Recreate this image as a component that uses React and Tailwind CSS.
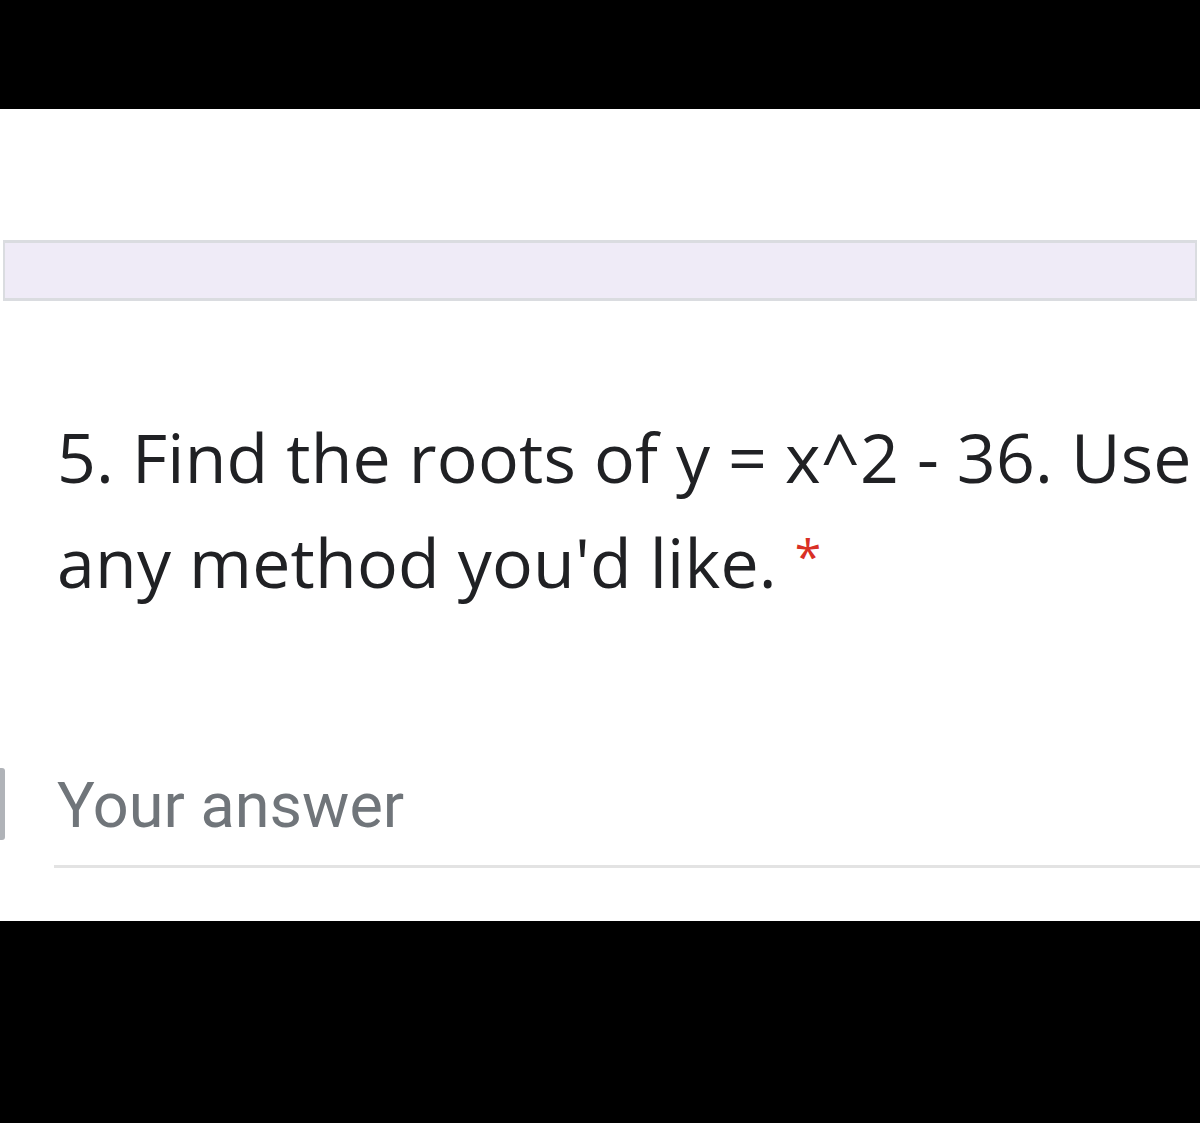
export default function App() {
  return (
    <div className="w-[1200px] h-[1123px] bg-white flex flex-col overflow-hidden">
      <div className="h-[109px] bg-black shrink-0" />
      <div className="h-[131px] shrink-0" />
      <div className="h-[61px] ml-[3px] mr-[3px] bg-[#efebf7] border-y-[3px] border-l-[2px] border-r-[2px] border-[#dadce0] shrink-0" />
      <div className="h-[103px] shrink-0" />
      <div className="h-[210px] shrink-0 pl-[57px] text-[#202124] text-[68px] leading-[105px] tracking-[0.2px] whitespace-nowrap" style={{ fontFamily: '"Open Sans", sans-serif' }}>
        <div>5. Find the roots of y = x^2 - 36. Use</div>
        <div>
          any method you'd like. <span className="text-[#d93025] text-[48px] align-top relative top-[-6px]">*</span>
        </div>
      </div>
      <div className="relative h-[307px] shrink-0 flex flex-col">
        <div className="absolute left-0 top-[154px] w-[5px] h-[72px] bg-[#b0b3b8] rounded-r-[3px]" />
        <div className="mt-[160px] ml-[57px] text-[63px] leading-none text-[#70757a]" style={{ fontFamily: 'Roboto, sans-serif' }}>Your answer</div>
        <div className="mt-[28px] ml-[54px] h-[3px] bg-[#e3e3e3]" />
      </div>
      <div className="flex-1 bg-black" />
    </div>
  );
}
